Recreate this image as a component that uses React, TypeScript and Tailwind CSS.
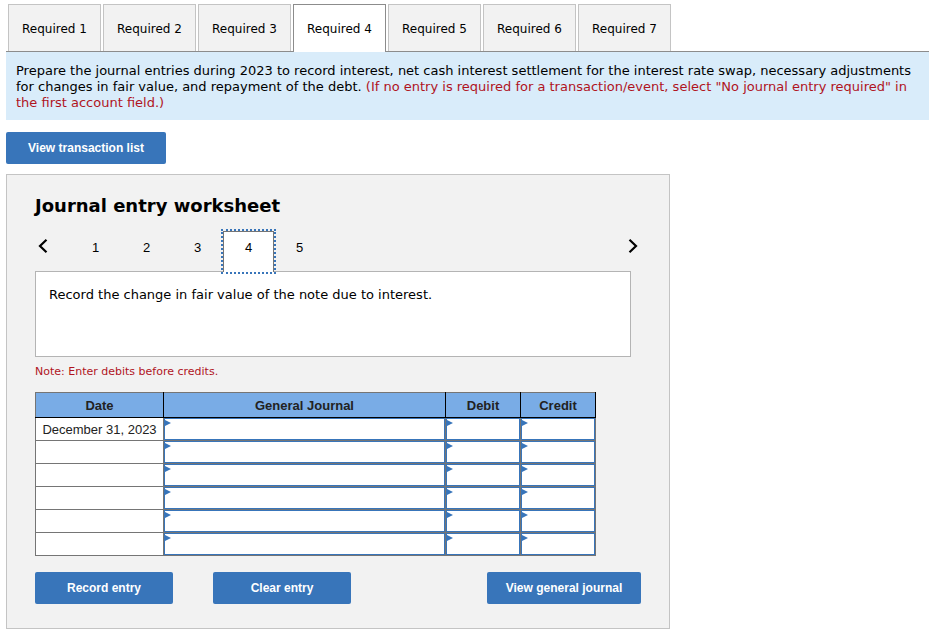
import { useState } from "react";
import { clsx } from "clsx";

const requirements = [1, 2, 3, 4, 5, 6, 7];
const steps = [1, 2, 3, 4, 5];
const rows = ["December 31, 2023", "", "", "", "", ""];
const columns = ["General Journal", "Debit", "Credit"];

function ActionButton({
    label,
    className
}: {
    label: string;
    className: string;
}) {
    return (
        <button
            type="button"
            className={clsx(
                "h-8 rounded-xs bg-[#3875ba] text-center font-['Liberation_Sans',sans-serif] text-xs font-bold text-white hover:bg-[#2d629f]",
                className
            )}
        >
            {label}
        </button>
    );
}

function Chevron({ direction }: { direction: "left" | "right" }) {
    return (
        <svg width="10" height="14" viewBox="0 0 10 14" fill="none" stroke="#000" strokeWidth="2.2">
            <path d={direction === "left" ? "M8.5 0.8 L2 7 L8.5 13.2" : "M1.5 0.8 L8 7 L1.5 13.2"} />
        </svg>
    );
}

function EntryCell({ label }: { label: string }) {
    return (
        <td className="relative border border-[#757575] p-0">
            <input
                aria-label={label}
                className="block h-[22px] w-full border border-[#3875ba] bg-white px-2 outline-none"
            />
            {/* marker for an editable cell */}
            <svg className="absolute top-0.5 left-px" width="6" height="6" viewBox="0 0 6 6" fill="#3875ba">
                <path d="M0 0 L6 3 L0 6 Z" />
            </svg>
        </td>
    );
}

function JournalTable() {
    return (
        <table className="mt-3 w-full max-w-[561px] table-fixed border-collapse bg-white font-['Liberation_Sans',sans-serif] text-[13px] leading-4">
            <colgroup>
                <col className="w-[128px]" />
                <col />
                <col className="w-[75px]" />
                <col className="w-[75px]" />
            </colgroup>
            <thead>
                <tr className="h-[25px] bg-[#79ace6] text-[#222]">
                    <th className="border border-[#757575] border-r-black border-b-black p-0 pt-0.5">Date</th>
                    {columns.map((column) => (
                        <th key={column} className="border border-black border-t-[#757575] p-0 pt-0.5">
                            {column}
                        </th>
                    ))}
                </tr>
            </thead>
            <tbody>
                {rows.map((date, i) => (
                    <tr key={i} className="h-[23px]">
                        <td className="border border-[#757575] p-0 pt-0.5 text-center whitespace-nowrap text-[#222]">{date}</td>
                        {columns.map((column) => (
                            <EntryCell key={column} label={column + ", line " + (i + 1)} />
                        ))}
                    </tr>
                ))}
            </tbody>
        </table>
    );
}

function Worksheet() {
    const [step, setStep] = useState(4);

    return (
        <section className="mt-2.5 w-full max-w-[664px] border border-[#c4c4c4] bg-[#f2f2f2] px-7 pt-[19px] pb-6">
            <h2 className="text-lg leading-6 font-bold">Journal entry worksheet</h2>
            <div className="mt-[13px] flex h-10 items-stretch pr-[3px]">
                <button
                    type="button"
                    aria-label="Previous entry"
                    className="flex w-[35px] items-start pt-2 pl-[3px]"
                    onClick={() => setStep(Math.max(1, step - 1))}
                >
                    <Chevron direction="left" />
                </button>
                {steps.map((n) => (
                    <button
                        key={n}
                        type="button"
                        onClick={() => setStep(n)}
                        className={clsx(
                            "w-[51px] border border-b-0 font-['Liberation_Sans',sans-serif] text-[13px]",
                            n === step
                                ? "z-10 -mb-px border-[#757575] bg-white pb-[9px] outline-2 outline-[#3875ba] outline-dotted"
                                : "border-transparent pb-[7px]"
                        )}
                    >
                        {n}
                    </button>
                ))}
                <button
                    type="button"
                    aria-label="Next entry"
                    className="ml-auto flex items-start pt-2"
                    onClick={() => setStep(Math.min(5, step + 1))}
                >
                    <Chevron direction="right" />
                </button>
            </div>
            <div className="mr-[10px] min-h-[86px] border border-[#b4b4b4] bg-white px-[13px] py-[15px] text-[13px] leading-4">
                Record the change in fair value of the note due to interest.
            </div>
            <p className="mt-[7px] text-[11px] leading-4 text-[#b0141e]">Note: Enter debits before credits.</p>
            <JournalTable />
            <div className="mt-4 flex flex-wrap gap-y-2">
                <ActionButton label="Record entry" className="mr-10 w-[138px]" />
                <ActionButton label="Clear entry" className="w-[138px]" />
                <ActionButton label="View general journal" className="ml-auto w-[154px]" />
            </div>
        </section>
    );
}

export default function App() {
    const [tab, setTab] = useState(4);

    return (
        <main className="min-h-screen bg-white pt-1 pr-[3px] pb-2 pl-[6px] font-['DejaVu_Sans',sans-serif] text-black">
            <nav className="flex gap-[2px] border-b border-[#8c8c8c] pl-[2px]">
                {requirements.map((n) => (
                    <button
                        key={n}
                        type="button"
                        onClick={() => setTab(n)}
                        className={clsx(
                            "w-[93px] border border-b-0 text-xs whitespace-nowrap",
                            n === tab
                                ? "z-10 -mb-px h-12 border-[#8c8c8c] bg-white pt-px"
                                : "h-[47px] border-[#c4c4c4] bg-[#f2f2f2] pt-0.5"
                        )}
                    >
                        Required {n}
                    </button>
                ))}
            </nav>
            <p className="bg-[#d9ecfa] px-[10px] pt-[11px] pb-[9px] text-[13px] leading-4">
                Prepare the journal entries during 2023 to record interest, net cash interest settlement for the interest rate
                swap, necessary adjustments for changes in fair value, and repayment of the debt.{" "}
                <span className="text-[#b0141e]">
                    (If no entry is required for a transaction/event, select "No journal entry required" in the first account
                    field.)
                </span>
            </p>
            <ActionButton label="View transaction list" className="mt-3 block w-[160px]" />
            <Worksheet />
        </main>
    );
}
